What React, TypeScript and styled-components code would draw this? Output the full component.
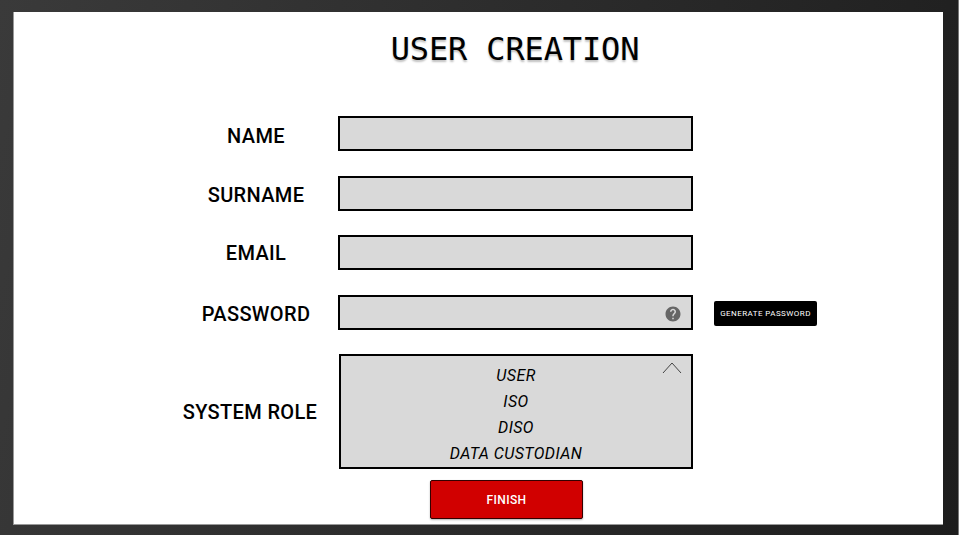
import React from "react";
import styled, { createGlobalStyle } from "styled-components";

const Global = createGlobalStyle`
  * { box-sizing: border-box; }
  body { margin: 0; font-family: Roboto, "Liberation Sans", sans-serif; color: #000; }
`;
const Backdrop = styled.main`
  width: 959px; height: 535px; padding: 12px 15px 10px 13px;
  background: linear-gradient(105deg, #3a3a3a 0%, #1d1d1d 100%);
  border-right: 1px solid #777;
`;
const Panel = styled.form`
  width: 930px; height: 513px; background: #fff;
  border-left: 1px solid #999; border-bottom: 1px solid #999;
  display: flex; flex-direction: column; overflow: hidden;
`;
const Title = styled.h1`
  margin: 17px 0 0 324px; width: 354px; height: 87px; text-align: center; white-space: nowrap;
  font: 400 32px/41px "DejaVu Sans Mono", monospace; letter-spacing: -0.14px;
  text-shadow: 0 2px 2px rgba(0,0,0,.25);
`;
const Row = styled.div<{ $gap: number }>`
  display: grid; grid-template-columns: 324px 355px 21px 103px;
  align-items: center; margin-bottom: ${p => p.$gap}px;
`;
const Label = styled.label<{ $top?: number; $left?: number }>`
  width: 160px; margin-left: ${p => p.$left ?? 162}px; text-align: center; white-space: nowrap;
  font-size: 20px; line-height: 24px; font-weight: 500; letter-spacing: .35px;
  padding-top: ${p => p.$top ?? 3}px;
`;
const Field = styled.div`
  height: 35px; border: 2px solid #000; background: #d9d9d9;
  display: flex; align-items: center; justify-content: flex-end; padding: 2px 9px 0 0;
`;
const Generate = styled.button`
  grid-column: 4; height: 25px; padding: 0; border: 0; border-radius: 2px; margin-top: 2px;
  background: #000; color: #fff; font: 400 8px Roboto, sans-serif; letter-spacing: .44px; white-space: nowrap;
`;
const Roles = styled.div`
  height: 115px; border: 2px solid #000; background: #d9d9d9; position: relative;
  margin-left: 1px; padding-top: 7px; text-align: center; font-size: 16px;
  font-style: italic; line-height: 26.1px; letter-spacing: .4px;
`;
const Caret = styled.svg`position: absolute; right: 9px; top: 5px;`;
const Finish = styled.button`
  width: 153px; height: 39px; margin: 11px 0 0 416px; border: 1px solid #300; border-radius: 2px;
  background: #d10000; color: #fff; font: 500 12px Roboto, sans-serif; letter-spacing: .4px;
  padding: 0; box-shadow: 0 1px 2px rgba(0,0,0,.3);
`;

export default function App() {
  return <><Global /><Backdrop><Panel>
    <Title>USER CREATION</Title>
    <Row $gap={25}><Label $top={4}>NAME</Label><Field /></Row>
    <Row $gap={24}><Label>SURNAME</Label><Field /></Row>
    <Row $gap={25}><Label $top={0}>EMAIL</Label><Field /></Row>
    <Row $gap={24}><Label $top={2}>PASSWORD</Label><Field>
      <svg width="18" height="18" viewBox="0 0 24 24" fill="#666"><path d="M12 2C6.48 2 2 6.48 2 12s4.48 10 10 10 10-4.48 10-10S17.52 2 12 2zm1 17h-2v-2h2v2zm2.07-7.75l-.9.92C13.45 12.9 13 13.5 13 15h-2v-.5c0-1.1.45-2.1 1.17-2.83l1.24-1.26c.37-.36.59-.86.59-1.41 0-1.1-.9-2-2-2s-2 .9-2 2H8c0-2.21 1.79-4 4-4s4 1.79 4 4c0 .88-.36 1.68-.93 2.25z"/></svg>
    </Field><Generate type="button">GENERATE PASSWORD</Generate></Row>
    <Row $gap={0}><Label $top={1} $left={156}>SYSTEM ROLE</Label><Roles>
      <div>USER</div><div>ISO</div><div>DISO</div><div>DATA CUSTODIAN</div>
      <Caret width="20" height="13"><path d="M1 12 10 2 19 12" fill="none" stroke="#444" /></Caret>
    </Roles></Row>
    <Finish type="button">FINISH</Finish>
  </Panel></Backdrop></>;
}
